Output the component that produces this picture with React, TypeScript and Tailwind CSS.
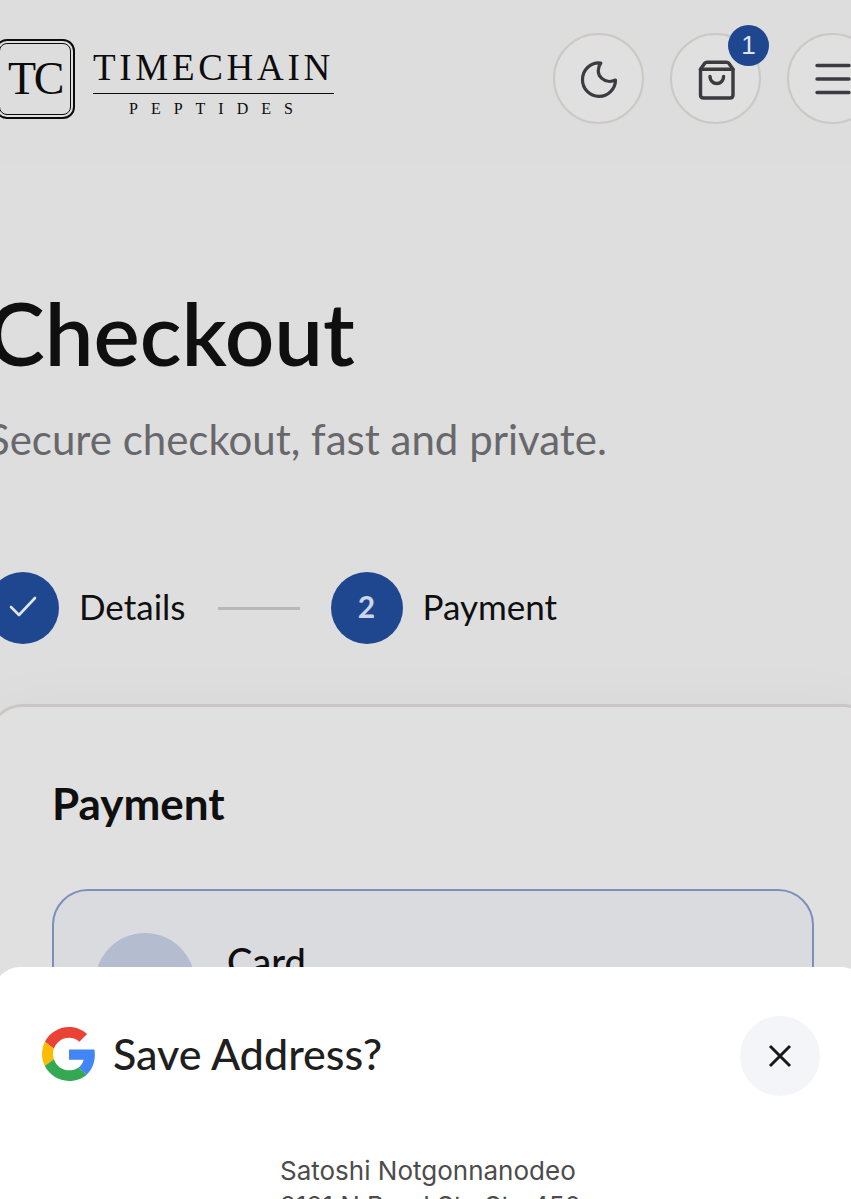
const Logo = () => (
  <a href="#" aria-label="Timechain Peptides" className="flex items-start gap-[18px] text-[#0c0c0d]">
    <span className="flex size-20 items-center justify-center rounded-xl border-2 border-current p-[2px]">
      <span className="flex size-full items-center justify-center rounded-lg border border-current font-['Liberation_Serif',serif] text-[46px] leading-none tracking-tighter">
        TC
      </span>
    </span>
    <span className="flex flex-col items-center pt-1.5 font-['Liberation_Serif',serif] whitespace-nowrap">
      <span className="text-[37px] leading-[46px] tracking-widest">TIMECHAIN</span>
      <span className="mt-0.5 mb-[3px] h-px w-full bg-current" />
      <span className="pl-2 text-base leading-6 tracking-[13px]">PEPTIDES</span>
    </span>
  </a>
);

const MoonIcon = () => (
  <svg viewBox="0 0 44 44" className="size-11" fill="none" stroke="currentColor" strokeWidth="3.2" strokeLinejoin="round" aria-hidden="true">
    <path d="M23.8 6C13.500 4.800 5.500 13 5.500 22.800a16.500 16.500 0 0 0 33 .2c-3.800 1.800-9.800 2.200-14-1.800-4.300-4-4.200-10.200-.7-15.200Z" />
  </svg>
);

const BagIcon = () => (
  <svg viewBox="0 0 44 44" className="size-11" fill="none" stroke="currentColor" strokeWidth="3.4" strokeLinecap="round" strokeLinejoin="round" aria-hidden="true">
    <path d="M6.500 12.200 10.700 6.200Q11.600 5.200 13 5.200H32.500Q34 5.200 34.800 6.200L39 12.200V38Q39 41 36 41H9.500Q6.500 41 6.500 38Z" />
    <path d="M6.500 12.200H39" />
    <path d="M16 19.500a6.700 6.900 0 0 0 13.600 0" />
  </svg>
);

const GoogleIcon = () => (
  <svg viewBox="0 0 48 48" className="size-[54px]" aria-hidden="true">
    <path fill="#EA4335" d="M24 9.500c3.540 0 6.710 1.220 9.210 3.600l6.850-6.850C35.900 2.380 30.470 0 24 0 14.620 0 6.510 5.380 2.560 13.220l7.980 6.190C12.430 13.720 17.740 9.500 24 9.500z" />
    <path fill="#4285F4" d="M46.980 24.550c0-1.570-.15-3.090-.38-4.550H24v9.020h12.940c-.58 2.960-2.260 5.480-4.780 7.180l7.730 6c4.510-4.180 7.090-10.360 7.090-17.650z" />
    <path fill="#FBBC05" d="M10.530 28.590c-.48-1.450-.76-2.990-.76-4.590s.27-3.140.76-4.590l-7.980-6.190C.92 16.460 0 20.120 0 24c0 3.880.92 7.540 2.560 10.780l7.970-6.190z" />
    <path fill="#34A853" d="M24 48c6.480 0 11.930-2.130 15.890-5.810l-7.730-6c-2.150 1.450-4.920 2.300-8.160 2.300-6.260 0-11.570-4.220-13.470-9.910l-7.980 6.190C6.510 42.620 14.620 48 24 48z" />
  </svg>
);

const iconButton =
  'relative flex size-[91px] items-center justify-center rounded-full border-2 border-[#cbc9c5] bg-[#e0e0e0] text-[#3b3b40]';

const Header = () => (
  <header className="-ml-[5px] -mr-[27px] flex h-[164px] items-start justify-between bg-[#dddddd] pt-[33px]">
    <div className="pt-[6px]">
      <Logo />
    </div>
    <div className="flex gap-[26px]">
      <button type="button" aria-label="Toggle dark mode" className={iconButton}>
        <MoonIcon />
      </button>
      <button type="button" aria-label="Cart" className={iconButton}>
        <BagIcon />
        <span className="absolute -top-2.5 -right-2.5 flex size-[41px] items-center justify-center rounded-full bg-[#1f4790] pb-0.5 font-['Liberation_Sans',sans-serif] text-[26px] leading-none text-[#dfe6f2]">
          1
        </span>
      </button>
      <button type="button" aria-label="Menu" className={iconButton}>
        <svg viewBox="0 0 36 32" className="h-8 w-9" stroke="currentColor" strokeWidth="3.4" strokeLinecap="round" aria-hidden="true">
          <path d="M2 2.500h32M2 16h32M2 29.500h32" />
        </svg>
      </button>
    </div>
  </header>
);

const Steps = () => (
  <ol className="flex items-center text-[35px] leading-[68px] text-[#0f0f10]">
    <li className="flex items-center gap-5">
      <span className="flex size-[72px] items-center justify-center rounded-full bg-[#1f4790] pb-1 text-[#dfe6f2]">
        <svg viewBox="0 0 28 24" className="h-6 w-7" fill="none" stroke="currentColor" strokeWidth="2.6" strokeLinecap="round" strokeLinejoin="round" aria-hidden="true">
          <path d="M2 13l8 8L26 4" />
        </svg>
      </span>
      <span className="pb-1">Details</span>
    </li>
    <li aria-hidden="true" className="mr-[31px] ml-8 h-[3px] w-[82px] bg-[#b8b8b6]" />
    <li className="flex items-center gap-5">
      <span className="flex size-[72px] items-center justify-center rounded-full bg-[#1f4790] pb-1 text-3xl font-bold text-[#ccd6e8]">
        2
      </span>
      <span className="pb-1">Payment</span>
    </li>
  </ol>
);

const PaymentCard = () => (
  <section className="mt-[60px] h-[700px] rounded-[36px] border-[3px] border-[#c9c8c6] bg-[#e0e0e0] px-[62px] pt-[68px] shadow-[0_0_60px_rgba(0,0,0,0.03)]">
    <h2 className="text-[44px] leading-[56px] font-bold text-[#0f0f10]">Payment</h2>
    <button
      type="button"
      className="mt-[58px] flex h-[188px] w-full items-center gap-8 rounded-[36px] border-2 border-[#7c8fbc] bg-[#dadbdf] px-[41px] text-left"
    >
      <span className="size-[100px] rounded-full bg-[#b4bccf]" />
      <span className="self-start pt-[48px] text-[38px] leading-[44px] font-medium text-[#0f0f10]">Card</span>
    </button>
  </section>
);

const SaveAddressSheet = () => (
  <div
    role="dialog"
    aria-labelledby="save-address-title"
    className="absolute -right-4 bottom-0 -left-1.5 h-[232px] overflow-hidden rounded-t-[26px] bg-white"
  >
    <div className="flex items-center pt-[49px] pr-[47px] pl-12">
      <span className="pb-1">
        <GoogleIcon />
      </span>
      <h2
        id="save-address-title"
        className="ml-[17px] flex-1 pb-1 font-['Lato',sans-serif] text-[43px] leading-[76px] font-medium whitespace-nowrap text-[#1f1f1f]"
      >
        Save Address?
      </h2>
      <button type="button" aria-label="Close" className="flex size-20 items-center justify-center rounded-full bg-[#f4f5f8] text-[#17181a]">
        <svg viewBox="0 0 24 24" className="size-6" stroke="currentColor" strokeWidth="3" aria-hidden="true">
          <path d="M2 2l20 20M22 2 2 22" />
        </svg>
      </button>
    </div>
    <address className="mt-[57px] ml-[286px] font-['Inter',sans-serif] text-[26px] leading-[35px] whitespace-nowrap text-[#4c4c4c] not-italic">
      <p>Satoshi Notgonnanodeo</p>
      <p>2121 N Road St., Ste 450</p>
    </address>
  </div>
);

const App = () => (
  <div className="relative h-screen overflow-hidden bg-[#dedede] font-['Lato',sans-serif]">
    <Header />
    <main className="-ml-[13px] -mr-[28px] pt-[109px]">
      <h1 className="text-[87px] leading-[120px] font-semibold text-[#0f0f10]">Checkout</h1>
      <p className="mt-4 mb-[103px] text-[42px] leading-[60px] whitespace-nowrap text-[#68686c]">
        Secure checkout, fast and private.
      </p>
      <Steps />
      <PaymentCard />
    </main>
    <SaveAddressSheet />
  </div>
);

export default App;
